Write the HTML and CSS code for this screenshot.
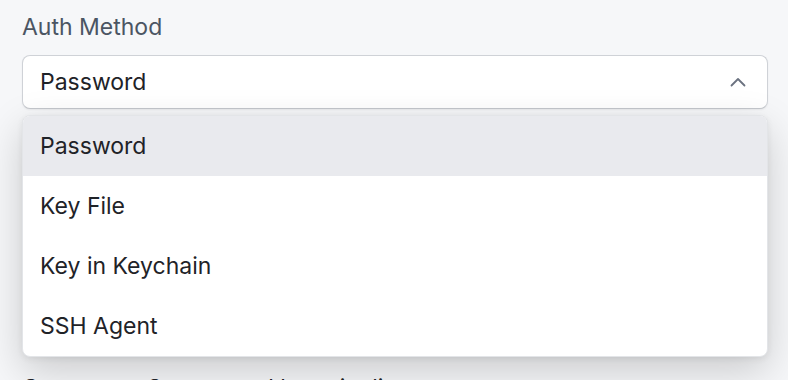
FILE: index.html
```html
<!DOCTYPE html>
<html>
<head>
<meta charset="utf-8">
<link rel="stylesheet" href="styles.css">
</head>
<body>
<div class="form">
  <div class="field">
    <label class="label">Auth Method</label>
    <div class="select-wrap">
      <div class="select">
        <span class="select-value">Password</span>
        <svg class="chevron" width="16" height="10" viewBox="0 0 16 10"><path d="M1.5 8.5 L8 2 L14.5 8.5" fill="none" stroke="#6b7280" stroke-width="1.8" stroke-linecap="round" stroke-linejoin="round"/></svg>
      </div>
      <ul class="menu">
        <li class="option active">Password</li>
        <li class="option">Key File</li>
        <li class="option">Key in Keychain</li>
        <li class="option">SSH Agent</li>
      </ul>
    </div>
  </div>
  <p class="next">Connect at Startup and keep it alive</p>
</div>
</body>
</html>
```
FILE: styles.css
```css
html, body {
  margin: 0;
  padding: 0;
  background: #f6f7f9;
  font-family: Inter, "Noto Sans", sans-serif;
  overflow: hidden;
}
.form {
  padding: 10px 20px 0 22px;
}
.label {
  display: block;
  font-size: 23px;
  line-height: 34px;
  color: #4b5563;
}
.select-wrap {
  position: relative;
  margin-top: 11px;
}
.select {
  box-sizing: border-box;
  height: 54px;
  border: 1.5px solid #cfd2d7;
  border-bottom-color: #c4c7cc;
  border-radius: 8px;
  background: #fff;
  box-shadow: 0 1px 2px rgba(0,0,0,0.06);
  display: flex;
  align-items: center;
  justify-content: space-between;
  padding: 0 21px 0 17px;
}
.select-value {
  font-size: 23px;
  color: #1f2328;
}
.chevron {
  display: block;
}
.menu {
  position: absolute;
  left: 0;
  right: 0;
  top: 60px;
  margin: 0;
  padding: 0;
  list-style: none;
  background: #fff;
  border: 1px solid #e3e5e8;
  border-radius: 8px;
  overflow: hidden;
  box-shadow: 0 14px 40px rgba(0,0,0,0.18), 0 2px 6px rgba(0,0,0,0.07);
  z-index: 2;
}
.option {
  height: 60px;
  display: flex;
  align-items: center;
  padding-left: 17px;
  font-size: 23px;
  color: #1f2328;
}
.option.active {
  background: #e9eaee;
}
.next {
  margin: 265px 0 0;
  font-size: 23px;
  line-height: 28px;
  color: #1f2328;
}
```
